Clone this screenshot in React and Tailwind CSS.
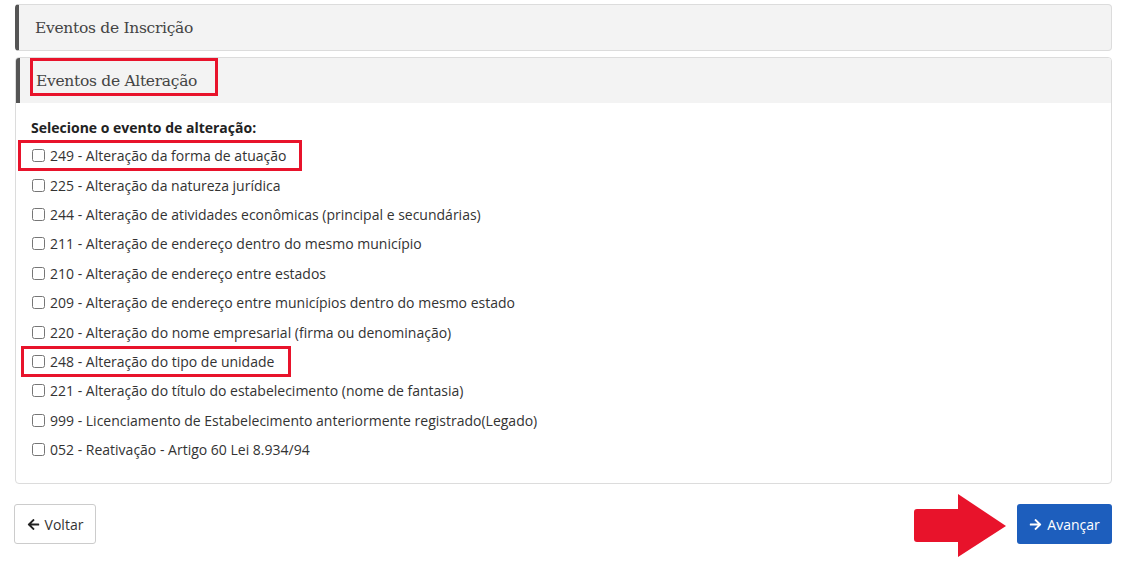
import { FaArrowLeft, FaArrowRight } from 'react-icons/fa';

const eventos = [
  { cod: '249', nome: 'Alteração da forma de atuação', destaque: 'w-[284px] -left-[13px]' },
  { cod: '225', nome: 'Alteração da natureza jurídica' },
  { cod: '244', nome: 'Alteração de atividades econômicas (principal e secundárias)' },
  { cod: '211', nome: 'Alteração de endereço dentro do mesmo município' },
  { cod: '210', nome: 'Alteração de endereço entre estados' },
  { cod: '209', nome: 'Alteração de endereço entre municípios dentro do mesmo estado' },
  { cod: '220', nome: 'Alteração do nome empresarial (firma ou denominação)' },
  { cod: '248', nome: 'Alteração do tipo de unidade', destaque: 'w-[270px] -left-[10px]' },
  { cod: '221', nome: 'Alteração do título do estabelecimento (nome de fantasia)' },
  { cod: '999', nome: 'Licenciamento de Estabelecimento anteriormente registrado(Legado)' },
  { cod: '052', nome: 'Reativação - Artigo 60 Lei 8.934/94' },
];

export default function App() {
  return (
    <main className="min-h-screen bg-white px-[14px] pt-[4px] text-[14px] text-[#333] font-['Open_Sans',sans-serif]">
      {/* painel recolhido */}
      <div className="w-[1097px] ml-px rounded-[4px] border border-[#dcdcdc] border-l-4 border-l-[#555] bg-[#f3f3f3]">
        <div className="h-[45px] flex items-center pl-[16px] pt-[2px] text-[15.5px] text-[#444] font-['DejaVu_Serif',serif] font-light tracking-[-0.3px]">
          Eventos de Inscrição
        </div>
      </div>

      {/* painel aberto */}
      <div className="mt-[6px] w-[1097px] ml-px rounded-[4px] border border-[#dcdcdc] bg-white overflow-hidden">
        <div className="h-[45px] flex items-center bg-[#f3f3f3] border-l-4 border-l-[#555] pl-[16px] pt-[3px]">
          <div className="relative text-[15.5px] text-[#444] font-['DejaVu_Serif',serif] font-light tracking-[-0.3px]">
            Eventos de Alteração
            <span className="absolute -left-[6px] -top-[12px] w-[188px] h-[38px] border-[3px] border-[#e8132b]" />
          </div>
        </div>
        <div className="pl-[15px] pt-[10px] pb-[19px]">
          <div className="h-[28px] flex items-center font-bold text-[#222]">Selecione o evento de alteração:</div>
          {eventos.map((e) => (
            <label key={e.cod} className="relative h-[29.4px] flex items-center gap-[5px]">
              <input type="checkbox" className="w-[13px] h-[13px] m-0 ml-px accent-[#1d5ebd]" />
              <span>{e.cod} - {e.nome}</span>
              {e.destaque && (
                <span className={`absolute top-[-1px] h-[31px] border-[3px] border-[#e8132b] ${e.destaque}`} />
              )}
            </label>
          ))}
        </div>
      </div>

      <div className="relative mt-[20px] w-[1098px] flex items-start justify-between">
        <button className="h-[40px] w-[82px] flex items-center justify-center gap-[5px] rounded-[3px] border border-[#ccc] bg-white text-[#333]">
          <FaArrowLeft className="w-[13px] h-[13px] text-[#222]" />
          Voltar
        </button>

        <svg className="absolute left-[900px] top-[-10px]" width="94" height="64" viewBox="0 0 94 64">
          <path d="M3 15 H44 V0 L92 32 L44 63 V48 H3 Q0 48 0 45 V18 Q0 15 3 15 Z" fill="#e8132b" />
        </svg>

        <button className="h-[40px] w-[95px] flex items-center justify-center gap-[5px] rounded-[3px] bg-[#1d5ebd] text-white">
          <FaArrowRight className="w-[13px] h-[13px]" />
          Avançar
        </button>
      </div>
    </main>
  );
}
